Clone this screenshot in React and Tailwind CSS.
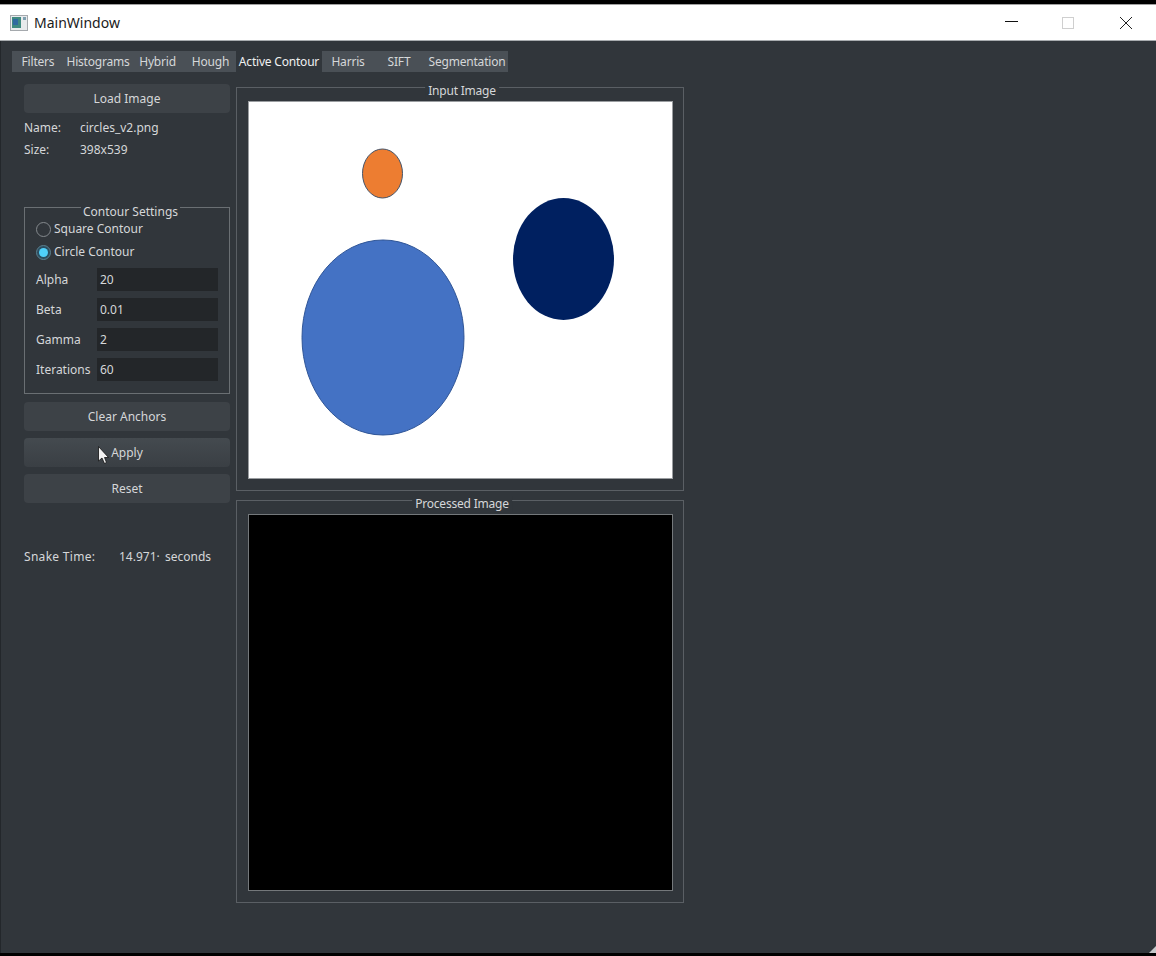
const tabs = [
  { label: 'Filters', w: 'w-[50px] pl-[2px]' },
  { label: 'Histograms', w: 'w-[72px]' },
  { label: 'Hybrid', w: 'w-[47px]' },
  { label: 'Hough', w: 'w-[55px] pl-1' },
  { label: 'Active Contour', w: 'w-[86px]', active: true },
  { label: 'Harris', w: 'w-[52px]' },
  { label: 'SIFT', w: 'w-[50px]' },
  { label: 'Segmentation', w: 'w-[84px] pl-[2px]' },
]

const params = [
  { label: 'Alpha', value: '20' },
  { label: 'Beta', value: '0.01' },
  { label: 'Gamma', value: '2' },
  { label: 'Iterations', value: '60' },
]

function PushButton({ label, className = '', children }) {
  return (
    <div className={`relative h-[29px] w-[206px] rounded-sm bg-[#3d4247] flex items-center justify-center text-[#d5d7d9] ${className}`}>
      {label}
      {children}
    </div>
  )
}

function Radio({ label, checked, className = '' }) {
  return (
    <div className={`flex items-center h-4 ${className}`}>
      {checked ? (
        <span className="w-[15px] h-[15px] rounded-full border border-[#5c7f8e] bg-[#2b4e60] flex items-center justify-center">
          <span className="w-[9px] h-[9px] rounded-full bg-[#4fd0fa]" />
        </span>
      ) : (
        <span className="w-[15px] h-[15px] rounded-full border border-[#84898d]" />
      )}
      <span className="ml-[3px]">{label}</span>
    </div>
  )
}

function ImageGroup({ title, className = '', children }) {
  return (
    <div className={`relative w-[448px] border border-[#5a5f64] pt-[13px] pl-[11px] ${className}`}>
      <span className="absolute left-[calc(50%+2px)] -top-[5px] -translate-x-1/2 bg-[#31363b] px-[3px] leading-4 tracking-[-0.2px] text-[#d5d7d9] whitespace-nowrap">
        {title}
      </span>
      {children}
    </div>
  )
}

function WindowIcon() {
  return (
    <svg width="18" height="16" viewBox="0 0 18 16" className="ml-[10px]">
      <rect x="0.5" y="0.5" width="17" height="15" fill="#e8eaec" stroke="#a5a9ad" />
      <rect x="2" y="2" width="9" height="11" fill="#3f8a80" />
      <rect x="3" y="4" width="5" height="6" fill="#2f6aa0" />
      <rect x="13" y="2" width="3" height="3" fill="#7fa0b0" />
    </svg>
  )
}

export default function App() {
  return (
    <div
      className="w-[1156px] h-[956px] bg-black overflow-hidden flex flex-col text-xs"
      style={{ fontFamily: '"Noto Sans", "Liberation Sans", sans-serif' }}
    >
      <div className="h-[37px] mt-1 bg-white border-t border-t-[#a0a0a0] border-b border-b-[#a9adb0] flex items-center text-[#1b1b1b] shrink-0">
        <WindowIcon />
        <span className="ml-[6px] text-sm">MainWindow</span>
        <div className="ml-auto flex items-center">
          <svg width="13" height="13" viewBox="0 0 13 13" className="mr-11">
            <path d="M0 5.500H13" stroke="#111" strokeWidth="1" />
          </svg>
          <svg width="12" height="12" viewBox="0 0 12 12" className="mr-[46px]">
            <rect x="0.5" y="0.5" width="11" height="11" fill="none" stroke="#cfcfcf" />
          </svg>
          <svg width="12" height="12" viewBox="0 0 12 12" className="mr-6">
            <path d="M0 0L12 12M12 0L0 12" stroke="#222" strokeWidth="1" />
          </svg>
        </div>
      </div>

      <div className="relative h-[912px] bg-[#31363b] text-[#d5d7d9] border-l border-[#23272b] shrink-0">
        <div className="flex ml-[11px] mt-[10px] h-[21px] tracking-[-0.2px]">
          {tabs.map((t) => (
            <div
              key={t.label}
              className={`${t.w} flex items-center justify-center whitespace-nowrap ${
                t.active ? 'bg-[#31363b] text-[#eff0f1]' : 'bg-[#4a5056]'
              }`}
            >
              {t.label}
            </div>
          ))}
        </div>

        <div className="flex">
          <div className="w-[212px] ml-[23px] flex flex-col">
            <PushButton label="Load Image" className="mt-3" />
            <div className="flex mt-[7px] h-4 items-center">
              <span className="w-14">Name:</span>
              <span>circles_v2.png</span>
            </div>
            <div className="flex mt-[6px] h-4 items-center">
              <span className="w-14">Size:</span>
              <span>398x539</span>
            </div>

            <div className="relative w-[206px] h-[187px] mt-[49px] border border-[#6a6f73] pl-[11px] pt-[13px]">
              <span className="absolute left-[56px] -top-[4px] bg-[#31363b] px-[2px] leading-4 whitespace-nowrap">
                Contour Settings
              </span>
              <Radio label="Square Contour" />
              <Radio label="Circle Contour" checked className="mt-[7px]" />
              <div className="flex flex-col gap-[7px] mt-[8px]">
                {params.map((p) => (
                  <div key={p.label} className="flex items-center h-[23px]">
                    <span className="w-[61px] whitespace-nowrap">{p.label}</span>
                    <span className="w-[121px] h-[23px] bg-[#232629] pl-[3px] flex items-center">{p.value}</span>
                  </div>
                ))}
              </div>
            </div>

            <PushButton label="Clear Anchors" className="mt-2" />
            <PushButton label="Apply" className="mt-[7px] bg-gradient-to-b from-[#444a4f] to-[#3a3f44]">
              <svg width="12" height="19" viewBox="0 0 12 19" className="absolute left-[74px] top-[8px]">
                <path d="M0.500 0.500V15L4 12L6.500 17.500L8.500 16.500L6.500 11.500H10.500Z" fill="#f2f2f2" stroke="#111" strokeWidth="0.8" />
              </svg>
            </PushButton>
            <PushButton label="Reset" className="mt-[7px]" />

            <div className="flex mt-[46px] h-4 items-center whitespace-nowrap">
              <span className="w-[95px] tracking-[0.3px]">Snake Time:</span>
              <span className="w-[46px]">14.971·</span>
              <span>seconds</span>
            </div>
          </div>

          <div className="flex flex-col mt-[15px]">
            <ImageGroup title="Input Image" className="h-[404px]">
              <div className="w-[425px] h-[378px] bg-white border border-[#9a9da0]">
                <svg width="423" height="376" viewBox="0 0 423 376" className="block">
                  <ellipse cx="133.500" cy="71.500" rx="20" ry="24.500" fill="#ed7d31" stroke="#44546a" strokeWidth="1" />
                  <ellipse cx="314.500" cy="157" rx="50.500" ry="61" fill="#002060" />
                  <ellipse cx="134" cy="235.500" rx="81" ry="97.500" fill="#4472c4" stroke="#2f5597" strokeWidth="1" />
                </svg>
              </div>
            </ImageGroup>
            <ImageGroup title="Processed Image" className="h-[403px] mt-[9px]">
              <div className="w-[425px] h-[377px] bg-black border border-[#74787b]" />
            </ImageGroup>
          </div>
        </div>

        <svg width="8" height="8" viewBox="0 0 8 8" className="absolute right-0 bottom-0">
          <path d="M8 1V8H1Z" fill="#c5c8ca" />
        </svg>
      </div>
    </div>
  )
}
